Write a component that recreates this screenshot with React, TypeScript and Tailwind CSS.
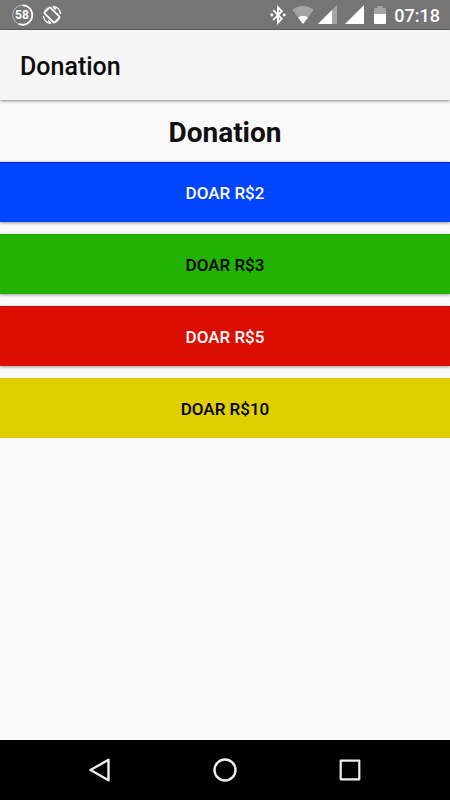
import { clsx } from 'clsx';

interface Donation {
  amount: number;
  className: string;
}

const donations: Donation[] = [
  { amount: 2, className: 'bg-[#0045ff] border-[#0018e0] text-white' },
  { amount: 3, className: 'bg-[#22b200] border-[#1ea300] text-black' },
  { amount: 5, className: 'bg-[#dc0e00] border-[#c80c00] text-white' },
  { amount: 10, className: 'bg-[#dfcf00] border-[#dfcf00] text-black' },
];

function BatteryPercent() {
  return (
    <div className="relative flex h-6 w-6 items-center justify-center">
      <svg className="absolute inset-0" width="24" height="24" viewBox="0 0 24 24" fill="none" stroke="white">
        <circle cx="12.5" cy="12" r="9.8" strokeWidth="1" strokeOpacity="0.5" />
        <path d="M12.5 2.3a9.7 9.7 0 1 1-4 18.5" strokeWidth="1.8" />
      </svg>
      <span className="text-[12px] leading-none font-bold">58</span>
    </div>
  );
}

function RotationIcon() {
  return (
    <svg width="20" height="20" viewBox="0 0 20 20" fill="none" stroke="white">
      <rect x="5.8" y="2.8" width="8.4" height="14.4" rx="1.2" strokeWidth="1.8" transform="rotate(-45 10 10)" />
      <path d="M11 1.4a8.6 8.6 0 0 1 7.6 7.6M9 18.6a8.6 8.6 0 0 1-7.6-7.6" strokeWidth="1.4" />
      <path d="M11 1.6l3 3M9 18.4l-3-3" strokeWidth="1.4" />
      <path d="M5.5 2.6a8.6 8.6 0 0 0-3 3M14.5 17.4a8.6 8.6 0 0 0 3-3" strokeWidth="1" strokeOpacity="0.5" />
    </svg>
  );
}

function BluetoothIcon() {
  return (
    <svg width="16" height="20" viewBox="0 0 16 20" fill="none" stroke="white">
      <path d="M3.2 5.2l8.6 8.6L8 17.6V2.4l3.8 3.8-8.6 8.6" strokeWidth="1.9" />
      <circle cx="1.8" cy="10" r="1.4" fill="white" stroke="none" />
      <circle cx="14.2" cy="10" r="1.4" fill="white" stroke="none" />
    </svg>
  );
}

function WifiIcon() {
  return (
    <svg width="22" height="18" viewBox="0 0 22 18" fill="white">
      <path d="M11 18L0.3 3.8C3.3 1.4 7 0 11 0s7.7 1.4 10.7 3.8z" fillOpacity="0.35" />
      <path d="M11 18L5.9 11.3C7.4 10.4 9.1 9.9 11 9.9s3.6 0.5 5.1 1.4z" />
    </svg>
  );
}

function SignalIcon({ full }: { full?: boolean }) {
  return (
    <svg width="19" height="19" viewBox="0 0 19 19" fill="white">
      <path d="M0 19L19 0v19z" fillOpacity={full ? 1 : 0.35} />
      {!full && <path d="M0 19L14 5v14z" />}
    </svg>
  );
}

function BatteryIcon() {
  return (
    <svg width="12" height="18" viewBox="0 0 12 18" fill="white">
      <path d="M0 8V3q0-1 1-1h2.5V0h5v2H11q1 0 1 1v5z" fillOpacity="0.35" />
      <path d="M0 8h12v9q0 1-1 1H1q-1 0-1-1z" />
    </svg>
  );
}

function StatusBar() {
  return (
    <div className="flex h-[30px] items-center justify-between border-b border-[#656565] bg-[#757575] px-2.5 text-white">
      <div className="flex items-center gap-2">
        <BatteryPercent />
        <RotationIcon />
      </div>
      <div className="flex items-center">
        <BluetoothIcon />
        <div className="ml-1.5 flex items-center gap-1">
          <WifiIcon />
          <SignalIcon />
        </div>
        <div className="ml-2 flex items-center gap-2.5">
          <SignalIcon full />
          <BatteryIcon />
        </div>
        <span className="ml-2 pt-0.5 text-[18px] leading-6 font-medium">07:18</span>
      </div>
    </div>
  );
}

function NavigationBar() {
  return (
    <nav className="flex h-[60px] items-center justify-center gap-[101px] bg-black">
      <button type="button" aria-label="Back">
        <svg width="24" height="24" viewBox="0 0 24 24" fill="none" stroke="#eeeeee" strokeWidth="2.4" strokeLinejoin="round">
          <path d="M2.5 12L20.5 1.8v20.4z" />
        </svg>
      </button>
      <button type="button" aria-label="Home">
        <svg width="24" height="24" viewBox="0 0 24 24" fill="none" stroke="#eeeeee" strokeWidth="2.4">
          <circle cx="12" cy="12" r="10.5" />
        </svg>
      </button>
      <button type="button" aria-label="Recent apps">
        <svg width="24" height="24" viewBox="0 0 24 24" fill="none" stroke="#eeeeee" strokeWidth="2.2" strokeLinejoin="round">
          <rect x="2.7" y="2.7" width="18.6" height="18.6" />
        </svg>
      </button>
    </nav>
  );
}

export default function App() {
  return (
    <div className="flex min-h-screen flex-col bg-[#fafafa] font-['Roboto',sans-serif]">
      <StatusBar />
      <header className="flex h-[70px] items-center bg-[#f5f5f5] px-5 pt-1 shadow-[0_1px_3px_rgba(0,0,0,0.45)]">
        <h1 className="text-[25px] leading-8 font-medium text-[#0c0c0c]">Donation</h1>
      </header>

      <main className="flex-1">
        <h2 className="pt-[17px] pb-[13px] text-center text-[28px] leading-8 font-bold text-[#111111]">Donation</h2>
        <div className="flex flex-col gap-3">
          {donations.map(({ amount, className }) => (
            <button
              key={amount}
              type="button"
              className={clsx(
                'h-[60px] w-full border-t text-[17px] leading-6 font-medium shadow-[0_1px_3px_rgba(0,0,0,0.4)] last:shadow-none',
                className,
              )}
            >
              DOAR R${amount}
            </button>
          ))}
        </div>
      </main>

      <NavigationBar />
    </div>
  );
}
